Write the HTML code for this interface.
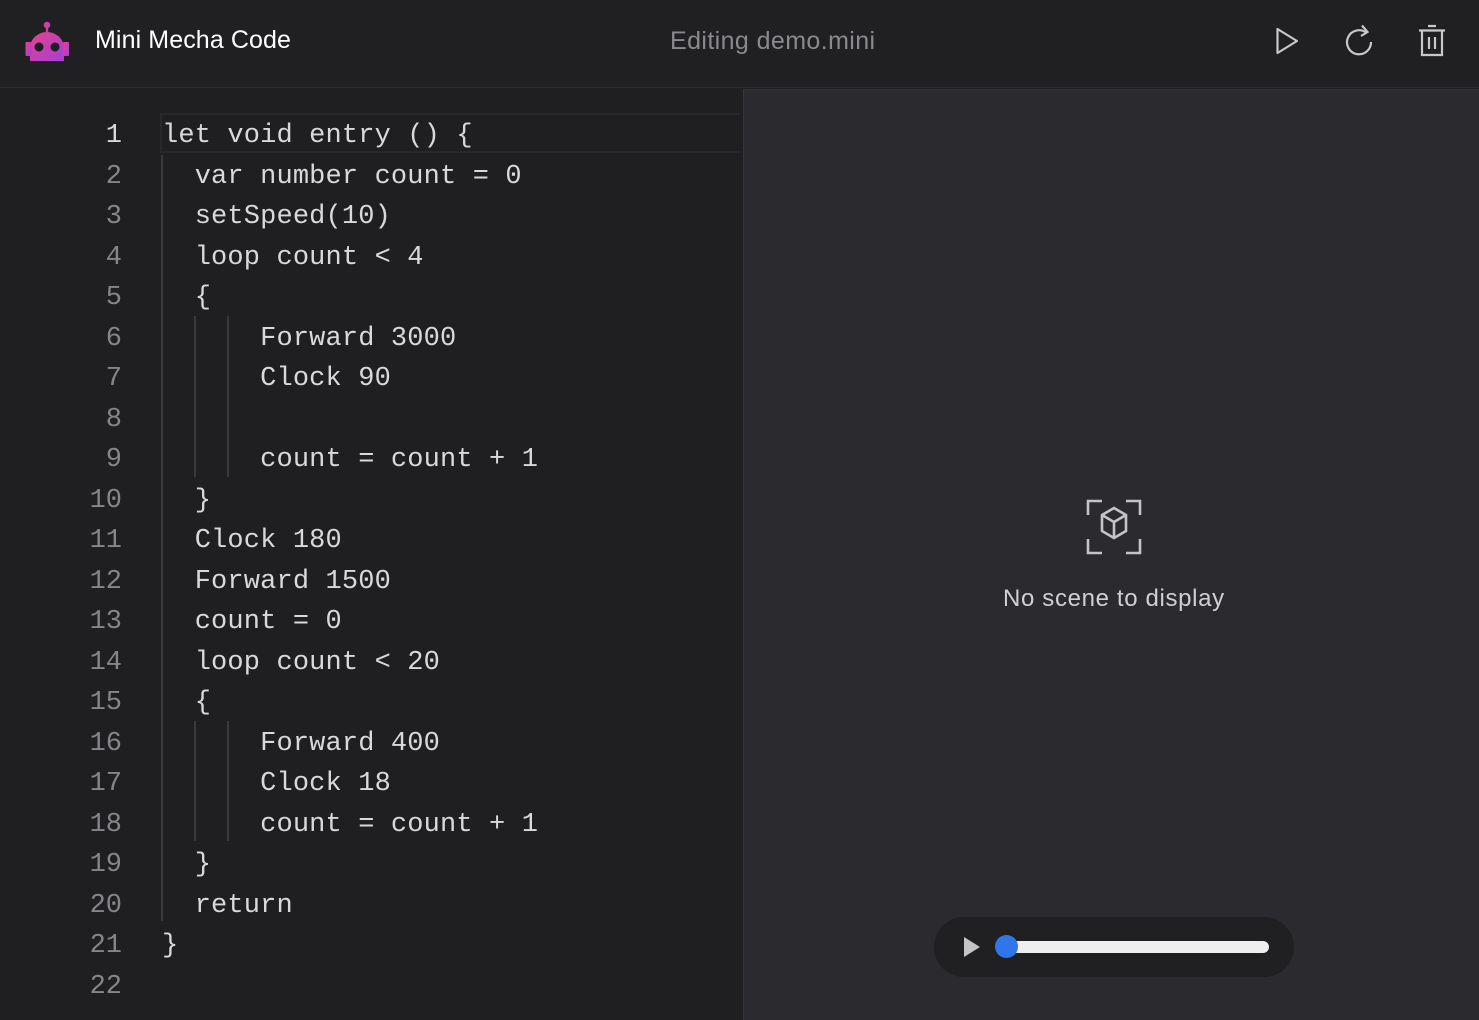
<!DOCTYPE html>
<html><head><meta charset="utf-8"><style>
*{margin:0;padding:0;box-sizing:border-box}
html,body{width:1479px;height:1020px;overflow:hidden}
body{background:#1f1e21;position:relative;font-family:"Liberation Sans",sans-serif}
.hdr{position:absolute;left:0;top:0;width:1479px;height:88px;background:#201f22;border-bottom:1px solid #2a292d}
.title{position:absolute;left:95px;top:26px;font-size:25px;color:#fff;letter-spacing:0.1px}
.file{position:absolute;left:670px;top:27px;font-size:25px;color:#8a8a8e;letter-spacing:0.4px}
.ed{position:absolute;left:0;top:89px;width:743px;height:931px;background:#1f1e21}
.ln,.cd{position:absolute;font-family:"Liberation Mono",monospace;font-size:27px;line-height:40.5px;height:40.5px;white-space:pre}
.ln{width:122px;text-align:right;left:0;color:#86868a}
.cd{left:162px;color:#d9d9d9;letter-spacing:0.15px}
.g{position:absolute;width:2px;background:#3a393d}
.rp{position:absolute;left:743px;top:89px;width:736px;height:931px;background:#2b2a2f;border-left:1px solid #35343a;border-top:1px solid #35343a}
.ns{position:absolute;left:1003px;top:585px;font-size:24px;color:#d0d0d4;letter-spacing:0.65px}
.bar{position:absolute;left:934px;top:917px;width:360px;height:60px;border-radius:30px;background:#201f22}
.c{position:absolute;top:3px;left:0;width:743px;height:1010px;overflow:hidden}
</style></head><body>
<div class="hdr">
<svg style="position:absolute;left:20px;top:15px" width="55" height="50" viewBox="20 15 55 50">
<defs><linearGradient id="gr" x1="0" y1="0" x2="1" y2="1"><stop offset="0" stop-color="#e5428c"/><stop offset="1" stop-color="#a43fd6"/></linearGradient></defs>
<circle cx="47" cy="25" r="3.3" fill="url(#gr)"/>
<rect x="45.8" y="26" width="2.4" height="7" fill="url(#gr)"/>
<path d="M30 61 V48 A17 16 0 0 1 64 48 V61 Z" fill="url(#gr)"/>
<rect x="25.5" y="42" width="6" height="14" rx="1" fill="url(#gr)"/>
<rect x="63" y="42" width="6" height="14" rx="1" fill="url(#gr)"/>
<circle cx="39" cy="47" r="4.5" fill="#1f1e21"/><circle cx="55" cy="47" r="4.5" fill="#1f1e21"/>
</svg>
<div class="title">Mini Mecha Code</div>
<div class="file">Editing demo.mini</div>
<svg style="position:absolute;left:1270px;top:24px" width="36" height="36" viewBox="0 0 36 36"><path d="M7.5 5 L7.5 29 L27 17 Z" fill="none" stroke="#c8c8c8" stroke-width="2.2" stroke-linejoin="round"/></svg>
<svg style="position:absolute;left:1340px;top:22px" width="40" height="40" viewBox="0 0 40 40"><path d="M31 20 A12 12 0 1 1 26 10.5" fill="none" stroke="#c8c8c8" stroke-width="2.2"/><path d="M22 3.5 L27.5 10 L21 14" fill="none" stroke="#c8c8c8" stroke-width="2.2"/></svg>
<svg style="position:absolute;left:1414px;top:22px" width="36" height="38" viewBox="0 0 36 38"><path d="M14 4 H22 M5 8.5 H31 M8 9 V33 H28 V9 M15 15 V27 M21 15 V27" fill="none" stroke="#c8c8c8" stroke-width="2.2"/></svg>
</div>
<div class="ed"></div>
<div style="position:absolute;left:160px;top:113px;width:580px;height:40px;border:2px solid #28272b;border-right:none"></div>
<div class="g" style="left:161px;top:155px;height:766px"></div>
<div class="g" style="left:194px;top:316px;height:161px"></div>
<div class="g" style="left:227px;top:316px;height:161px"></div>
<div class="g" style="left:194px;top:721px;height:120px"></div>
<div class="g" style="left:227px;top:721px;height:120px"></div>
<div class="c">
<div class="ln" style="top:113px;color:#d9d9d9">1</div><div class="cd" style="top:113px">let void entry () {</div>
<div class="ln" style="top:153.5px">2</div><div class="cd" style="top:153.5px">  var number count = 0</div>
<div class="ln" style="top:194px">3</div><div class="cd" style="top:194px">  setSpeed(10)</div>
<div class="ln" style="top:234.5px">4</div><div class="cd" style="top:234.5px">  loop count &lt; 4</div>
<div class="ln" style="top:275px">5</div><div class="cd" style="top:275px">  {</div>
<div class="ln" style="top:315.5px">6</div><div class="cd" style="top:315.5px">      Forward 3000</div>
<div class="ln" style="top:356px">7</div><div class="cd" style="top:356px">      Clock 90</div>
<div class="ln" style="top:396.5px">8</div>
<div class="ln" style="top:437px">9</div><div class="cd" style="top:437px">      count = count + 1</div>
<div class="ln" style="top:477.5px">10</div><div class="cd" style="top:477.5px">  }</div>
<div class="ln" style="top:518px">11</div><div class="cd" style="top:518px">  Clock 180</div>
<div class="ln" style="top:558.5px">12</div><div class="cd" style="top:558.5px">  Forward 1500</div>
<div class="ln" style="top:599px">13</div><div class="cd" style="top:599px">  count = 0</div>
<div class="ln" style="top:639.5px">14</div><div class="cd" style="top:639.5px">  loop count &lt; 20</div>
<div class="ln" style="top:680px">15</div><div class="cd" style="top:680px">  {</div>
<div class="ln" style="top:720.5px">16</div><div class="cd" style="top:720.5px">      Forward 400</div>
<div class="ln" style="top:761px">17</div><div class="cd" style="top:761px">      Clock 18</div>
<div class="ln" style="top:801.5px">18</div><div class="cd" style="top:801.5px">      count = count + 1</div>
<div class="ln" style="top:842px">19</div><div class="cd" style="top:842px">  }</div>
<div class="ln" style="top:882.5px">20</div><div class="cd" style="top:882.5px">  return</div>
<div class="ln" style="top:923px">21</div><div class="cd" style="top:923px">}</div>
<div class="ln" style="top:963.5px">22</div>
</div>
<div class="rp"></div>
<svg style="position:absolute;left:1086px;top:499px" width="56" height="56" viewBox="0 0 56 56">
<g fill="none" stroke="#c4c4c4" stroke-width="2.6">
<path d="M2 16 V2 H16 M40 2 H54 V16 M54 40 V54 H40 M16 54 H2 V40"/>
<path d="M28 9 L40 16 V32 L28 39 L16 32 V16 Z M16 16 L28 23 L40 16 M28 23 V39"/>
</g></svg>
<div class="ns">No scene to display</div>
<div class="bar"></div>
<svg style="position:absolute;left:962px;top:936px" width="20" height="22" viewBox="0 0 20 22"><path d="M2 1 L18 11 L2 21 Z" fill="#c4c4c4"/></svg>
<div style="position:absolute;left:1000px;top:941px;width:269px;height:12px;border-radius:6px;background:#efefef"></div>
<div style="position:absolute;left:995px;top:935px;width:23px;height:23px;border-radius:50%;background:#2f76ea"></div>
</body></html>
